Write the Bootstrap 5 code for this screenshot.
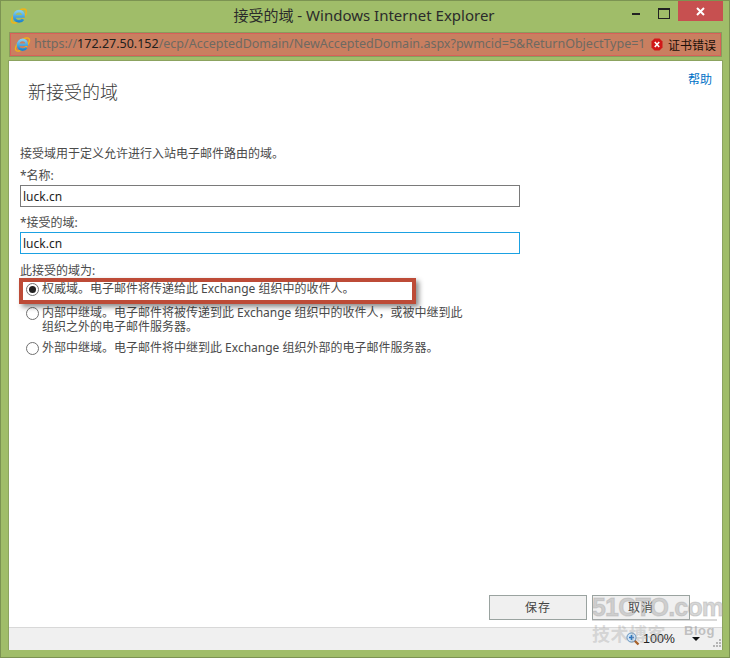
<!DOCTYPE html>
<html lang="zh-CN">
<head>
<meta charset="utf-8">
<title>接受的域 - Windows Internet Explorer</title>
<link rel="stylesheet" href="https://cdn.jsdelivr.net/npm/bootstrap@5.3.0/dist/css/bootstrap.min.css">
<style>
html,body{height:100%;margin:0;overflow:hidden}
body{background:#a0bd69;font-family:"Noto Sans","Noto Sans CJK SC",sans-serif;font-size:12px;color:#4a4a4a}
.win-frame{width:730px;height:658px;border:1px solid #7c9352;position:relative;display:flex;flex-direction:column}
.title-bar{height:31px;flex:none;position:relative}
.title-text{font-size:15px;color:#2b2b2b;line-height:29px;text-align:center;padding-right:2px}
.app-ico{position:absolute;left:9px;top:6px}
.win-btns{position:absolute;right:6px;top:0;display:flex;align-items:flex-start}
.w-min{width:8px;height:2px;background:#222;margin:12px 18px 0 0}
.w-max{width:10px;height:8px;border:1px solid #222;border-top-width:2px;margin:7px 8px 0 0;box-sizing:content-box}
.w-close{width:45px;height:20px;background:#c75050;color:#fff;display:flex;align-items:center;justify-content:center}
.url-bar{height:23px;flex:none;margin:1px 8px 0 9px;background:#c97f60;border:1px solid #d9605a;outline:1px solid #8a9a5c;display:flex;align-items:center;font-family:"Noto Sans",sans-serif;font-size:12.5px;color:#6e6a62;padding-left:3px;white-space:nowrap}
.url-bar b{font-weight:400;color:#20201c}
.url-rest{flex:1;padding-left:3px;overflow:hidden}
.cert-txt{font-family:"Noto Sans CJK SC",sans-serif;font-size:12px;color:#1c0f08;margin:0 4px 0 5px}
.page-area{margin:4px 6px 0 7px;flex:1;background:#fff;border:1px solid #8ca360;border-bottom:0;display:flex;flex-direction:column;min-height:0}
.content-col{flex:1;position:relative;padding:0 11px;display:flex;flex-direction:column;min-height:0}
.help-link{align-self:flex-end;color:#0072c6;text-decoration:none;font-size:12px;line-height:16px;margin-top:11px;margin-right:-1px}
.page-head{font-size:18px;font-weight:300;line-height:24px;margin:-8px 0 42px 8px;color:#3a3a3a}
.desc{line-height:16px;margin-bottom:6px}
.fld-label{line-height:16px;margin-bottom:1px;display:block}
.fld-input{width:500px;height:22px;border:1px solid #7a7a7a;padding:0 2px;font-family:"Noto Sans",sans-serif;font-size:12px;color:#222;display:block;border-radius:0;margin-bottom:8px;outline:0;background:#fff}
.fld-focus{border-color:#1ba1e2;margin-bottom:9px}
.opt-row{display:flex;align-items:flex-start;gap:3px;line-height:14px;color:#4a4a4a;padding-left:6px}
.rd{flex:none;width:13px;height:13px;border-radius:50%;border:1px solid #707070;background:#fff;margin-top:1px;display:flex;align-items:center;justify-content:center}
.rd i{display:block;width:7px;height:7px;border-radius:50%;background:#222}
.opt-txt{width:422px}
.opt-1{margin-top:3px;margin-bottom:10px}
.opt-2{margin-bottom:7px}
.hilite{position:absolute;left:10px;top:217px;width:397px;height:26px;border:4px solid #bd4b37;box-shadow:3px 3px 5px rgba(0,0,0,.45);pointer-events:none}
.foot-btns{margin-top:auto;display:flex;justify-content:flex-end;gap:5px;padding-right:21px;padding-bottom:7px}
.act-btn{width:98px;height:25px;border:1px solid #9aa3a0;background:#f0f0f0;color:#444;font-size:12px;letter-spacing:1px;padding:0;border-radius:0;line-height:22px}
.status-bar{height:23px;flex:none;background:#f0f0f0;border-top:1px solid #d8d8d8;display:flex;justify-content:flex-end;align-items:center;position:relative;font-family:"Liberation Sans",sans-serif;font-size:12.5px;color:#222;padding-right:22px}
.caret-d{width:0;height:0;border-left:4px solid transparent;border-right:4px solid transparent;border-top:4px solid #111;margin-left:17px}
.grip{position:absolute;right:1px;bottom:2px}
.wm{position:absolute;left:592px;top:592px;font-family:"Liberation Sans",sans-serif;pointer-events:none;line-height:1}
.wm-a{font-size:25px;font-weight:700;height:29px;line-height:30px;letter-spacing:-.8px;color:rgba(150,150,150,.4);-webkit-text-stroke:1px rgba(170,170,170,.4);border-bottom:2px solid rgba(170,170,170,.45);width:125px;white-space:nowrap}
.wm-b{display:flex;justify-content:space-between;width:125px;margin-top:3px}
.wm-cn{font-family:"Noto Sans CJK SC",sans-serif;font-size:18px;letter-spacing:.5px;font-weight:700;color:rgba(170,170,170,.4)}
.wm-bl{font-size:13px;font-weight:700;letter-spacing:.5px;margin-right:2px;color:rgba(150,150,150,.55)}
.zoom-lbl{margin-left:3px}
</style>
</head>
<body>
<svg width="0" height="0" class="position-absolute" aria-hidden="true">
  <defs>
    <linearGradient id="ieblue" x1="0" y1="0" x2="0" y2="1"><stop offset="0" stop-color="#7fcdf2"/><stop offset="1" stop-color="#1f86cf"/></linearGradient>
    <symbol id="ie-logo" viewBox="0 0 18 18">
      <ellipse cx="9" cy="9" rx="9.300" ry="4.300" transform="rotate(-42 9 9)" fill="none" stroke="#f2b416" stroke-width="1.500"/>
      <path d="M4.900 9.300h8.600c.2-3.200-1.800-5.200-4.300-5.200-2.800 0-5 2.400-5 5.500 0 2.900 2.100 4.800 4.800 4.800 1.800 0 3.300-.8 4.100-2.100" fill="none" stroke="url(#ieblue)" stroke-width="2.700"/>
    </symbol>
  </defs>
</svg>
<div class="win-frame">
  <div class="title-bar">
    <svg class="app-ico" width="18" height="18" aria-hidden="true"><use href="#ie-logo"/></svg>
    <div class="title-text">接受的域 - Windows Internet Explorer</div>
    <div class="win-btns">
      <div class="w-min"></div>
      <div class="w-max"></div>
      <div class="w-close">
        <svg width="9" height="9" viewBox="0 0 9 9" aria-hidden="true"><path d="M1 1l7 7M8 1l-7 7" stroke="#fff" stroke-width="2"/></svg>
      </div>
    </div>
  </div>
  <div class="url-bar">
    <svg width="17" height="17" class="flex-none" aria-hidden="true"><use href="#ie-logo"/></svg>
    <div class="url-rest">https://<b>172.27.50.152</b>/ecp/AcceptedDomain/NewAcceptedDomain.aspx?pwmcid=5&amp;ReturnObjectType=1</div>
    <svg width="12" height="13" viewBox="0 0 12 13" class="flex-none" aria-hidden="true"><path d="M3.500.5h5l3 3v6l-3 3h-5l-3-3v-6z" fill="#d01818"/><path d="M3.800 4l4.400 5M8.200 4L3.800 9" stroke="#fff" stroke-width="1.600"/></svg>
    <span class="cert-txt">证书错误</span>
  </div>
  <div class="page-area">
    <div class="content-col">
      <a class="help-link" href="#">帮助</a>
      <div class="page-head">新接受的域</div>
      <div class="desc">接受域用于定义允许进行入站电子邮件路由的域。</div>
      <label class="fld-label">*名称:</label>
      <input class="fld-input" type="text" value="luck.cn">
      <label class="fld-label">*接受的域:</label>
      <input class="fld-input fld-focus" type="text" value="luck.cn">
      <div class="fld-label mb-0">此接受的域为:</div>
      <div class="opt-row opt-1"><span class="rd"><i></i></span><span class="opt-txt">权威域。电子邮件将传递给此 Exchange 组织中的收件人。</span></div>
      <div class="opt-row opt-2"><span class="rd"></span><span class="opt-txt">内部中继域。电子邮件将被传递到此 Exchange 组织中的收件人，或被中继到此组织之外的电子邮件服务器。</span></div>
      <div class="opt-row"><span class="rd"></span><span class="opt-txt">外部中继域。电子邮件将中继到此 Exchange 组织外部的电子邮件服务器。</span></div>
      <div class="hilite"></div>
      <div class="foot-btns">
        <button class="act-btn" type="button">保存</button>
        <button class="act-btn" type="button">取消</button>
      </div>
    </div>
    <div class="status-bar">
      <svg width="14" height="14" viewBox="0 0 14 14" aria-hidden="true"><path d="M8.500 8.500l4 4" stroke="#a8622c" stroke-width="2.400"/><circle cx="5.500" cy="5.500" r="4.600" fill="#cfe4f7" stroke="#5f8db8"/><path d="M5.500 3v5M3 5.500h5" stroke="#2a6fc0" stroke-width="1.600"/></svg>
      <span class="zoom-lbl">100%</span>
      <span class="caret-d"></span>
      <svg class="grip" width="9" height="9" viewBox="0 0 9 9" aria-hidden="true"><path d="M7 0h2v2H7zM4 3h2v2H4zM7 3h2v2H7zM1 6h2v2H1zM4 6h2v2H4zM7 6h2v2H7z" fill="#b5b5b5"/></svg>
    </div>
  </div>
  <div class="flex-none" style="height:7px"></div>
</div>
<div class="wm">
  <div class="wm-a">51CTO.com</div>
  <div class="wm-b"><span class="wm-cn">技术博客</span><span class="wm-bl">Blog</span></div>
</div>
<script src="https://cdn.jsdelivr.net/npm/bootstrap@5.3.0/dist/js/bootstrap.bundle.min.js"></script>
</body>
</html>
